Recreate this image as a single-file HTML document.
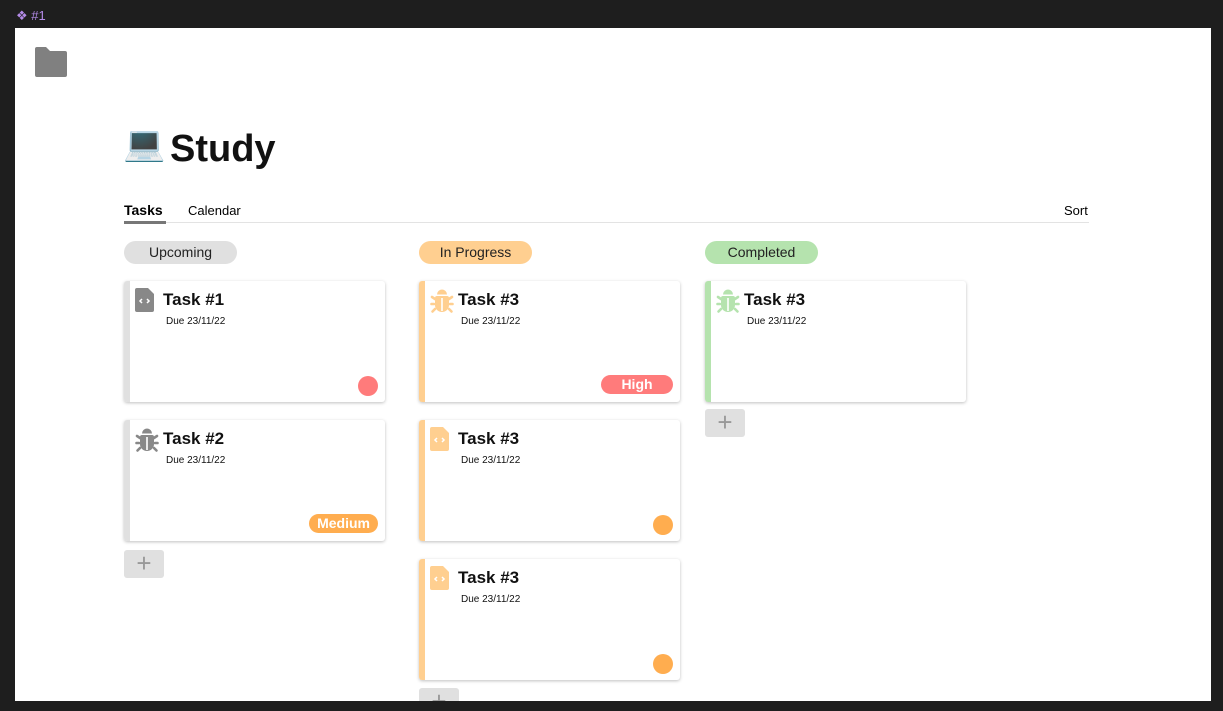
<!DOCTYPE html>
<html><head><style>
*{margin:0;padding:0;box-sizing:border-box}
body{width:1223px;height:711px;background:#1e1e1e;position:relative;overflow:hidden;font-family:"Liberation Sans",sans-serif}
.lbl{position:absolute;left:16px;top:8px;color:#b48be8;font-size:13px}
.page{position:absolute;left:15px;top:28px;width:1196px;height:673px;background:#fff;overflow:hidden}
.a{position:absolute}
.pill{position:absolute;top:213px;height:23px;border-radius:12px;font-size:14px;text-align:center;line-height:23px;color:#222;width:113px}
.card{position:absolute;width:261px;height:121px;background:#fff;border-radius:3px;box-shadow:0 1px 3px rgba(0,0,0,.25);overflow:hidden}
.card .bar{position:absolute;left:0;top:0;bottom:0;width:6px}
.card .t{position:absolute;left:39px;top:9px;font-size:17px;font-weight:bold;color:#111}
.card .d{position:absolute;left:42px;top:35px;font-size:10px;color:#111}
.card svg{position:absolute;left:11px;top:7px}
.dot{position:absolute;right:7px;bottom:6px;width:20px;height:20px;border-radius:50%}
.tag{position:absolute;right:7px;bottom:8px;height:19px;border-radius:10px;color:#fff;font-weight:bold;font-size:14px;line-height:19px;padding:0 8px}
.add{position:absolute;width:40px;height:28px;background:#e0e0e0;border-radius:3px;color:#999;font-size:26px;text-align:center;line-height:27px}
</style></head><body>
<div class="lbl">❖ #1</div>
<div class="page">
<svg class="a" style="left:18px;top:18px" width="36" height="32" viewBox="0 0 36 32"><path d="M2 3 Q2 1 4 1 H13 L17 5 H32 Q34 5 34 7 V29 Q34 31 32 31 H4 Q2 31 2 29Z" fill="#808080"/></svg>
<div class="a" style="left:108px;top:96px;font-size:34px">💻</div>
<div class="a" style="left:155px;top:100px;font-size:38px;font-weight:bold;color:#111">Study</div>
<div class="a" style="left:109px;top:174px;font-size:14px;font-weight:bold">Tasks</div>
<div class="a" style="left:109px;top:194px;width:965px;height:1px;background:#e3e3e3"></div>
<div class="a" style="left:109px;top:193px;width:42px;height:3px;background:#777"></div>
<div class="a" style="left:173px;top:175px;font-size:13px">Calendar</div>
<div class="a" style="left:1049px;top:175px;font-size:13px">Sort</div>

<div class="pill" style="left:109px;background:#e0e0e0">Upcoming</div>
<div class="pill" style="left:404px;background:#ffcf90">In Progress</div>
<div class="pill" style="left:690px;background:#b5e3ae">Completed</div>

<!-- col1 -->
<div class="card" style="left:109px;top:253px"><div class="bar" style="background:#e0e0e0"></div>
<svg width="20" height="24" viewBox="0 0 20 24"><path d="M2 0H13L19 6V22Q19 24 17 24H2Q0 24 0 22V2Q0 0 2 0Z" fill="#888"/><path d="M7 11L5 13L7 15M12 11L14 13L12 15" stroke="#fff" stroke-width="1.5" fill="none"/></svg>
<div class="t">Task #1</div><div class="d">Due 23/11/22</div><div class="dot" style="background:#ff7b7b"></div></div>
<div class="card" style="left:109px;top:392px"><div class="bar" style="background:#e0e0e0"></div>
<svg width="24" height="26" viewBox="0 0 24 26"><g fill="#888" stroke="#888" stroke-width="2.6" stroke-linecap="round"><path d="M7 6.5A5 5 0 0 1 17 6.5Z" stroke="none"/><path d="M5 10Q5 8 7 8H17Q19 8 19 10V17A7 7 0 0 1 5 17Z" stroke="none"/><path d="M5 11L2 9M19 11L22 9M4 16H1.5M20 16H22.5M5 21L2.5 23.5M19 21L21.5 23.5" fill="none"/></g><rect x="11.2" y="10" width="1.6" height="13" fill="#fff"/></svg>
<div class="t">Task #2</div><div class="d">Due 23/11/22</div><div class="tag" style="background:#ffad4f">Medium</div></div>
<div class="add" style="left:109px;top:522px">+</div>

<!-- col2 -->
<div class="card" style="left:404px;top:253px"><div class="bar" style="background:#ffcf90"></div>
<svg width="24" height="26" viewBox="0 0 24 26"><g fill="#ffcf90" stroke="#ffcf90" stroke-width="2.6" stroke-linecap="round"><path d="M7 6.5A5 5 0 0 1 17 6.5Z" stroke="none"/><path d="M5 10Q5 8 7 8H17Q19 8 19 10V17A7 7 0 0 1 5 17Z" stroke="none"/><path d="M5 11L2 9M19 11L22 9M4 16H1.5M20 16H22.5M5 21L2.5 23.5M19 21L21.5 23.5" fill="none"/></g><rect x="11.2" y="10" width="1.6" height="13" fill="#fff"/></svg>
<div class="t">Task #3</div><div class="d">Due 23/11/22</div><div class="tag" style="background:#ff7b7b;width:72px;text-align:center">High</div></div>
<div class="card" style="left:404px;top:392px"><div class="bar" style="background:#ffcf90"></div>
<svg width="20" height="24" viewBox="0 0 20 24"><path d="M2 0H13L19 6V22Q19 24 17 24H2Q0 24 0 22V2Q0 0 2 0Z" fill="#ffcf90"/><path d="M7 11L5 13L7 15M12 11L14 13L12 15" stroke="#fff" stroke-width="1.5" fill="none"/></svg>
<div class="t">Task #3</div><div class="d">Due 23/11/22</div><div class="dot" style="background:#ffad4f"></div></div>
<div class="card" style="left:404px;top:531px"><div class="bar" style="background:#ffcf90"></div>
<svg width="20" height="24" viewBox="0 0 20 24"><path d="M2 0H13L19 6V22Q19 24 17 24H2Q0 24 0 22V2Q0 0 2 0Z" fill="#ffcf90"/><path d="M7 11L5 13L7 15M12 11L14 13L12 15" stroke="#fff" stroke-width="1.5" fill="none"/></svg>
<div class="t">Task #3</div><div class="d">Due 23/11/22</div><div class="dot" style="background:#ffad4f"></div></div>
<div class="add" style="left:404px;top:660px">+</div>

<!-- col3 -->
<div class="card" style="left:690px;top:253px"><div class="bar" style="background:#b5e3ae"></div>
<svg width="24" height="26" viewBox="0 0 24 26"><g fill="#b5e3ae" stroke="#b5e3ae" stroke-width="2.6" stroke-linecap="round"><path d="M7 6.5A5 5 0 0 1 17 6.5Z" stroke="none"/><path d="M5 10Q5 8 7 8H17Q19 8 19 10V17A7 7 0 0 1 5 17Z" stroke="none"/><path d="M5 11L2 9M19 11L22 9M4 16H1.5M20 16H22.5M5 21L2.5 23.5M19 21L21.5 23.5" fill="none"/></g><rect x="11.2" y="10" width="1.6" height="13" fill="#fff"/></svg>
<div class="t">Task #3</div><div class="d">Due 23/11/22</div></div>
<div class="add" style="left:690px;top:381px">+</div>
</div>
</body></html>
